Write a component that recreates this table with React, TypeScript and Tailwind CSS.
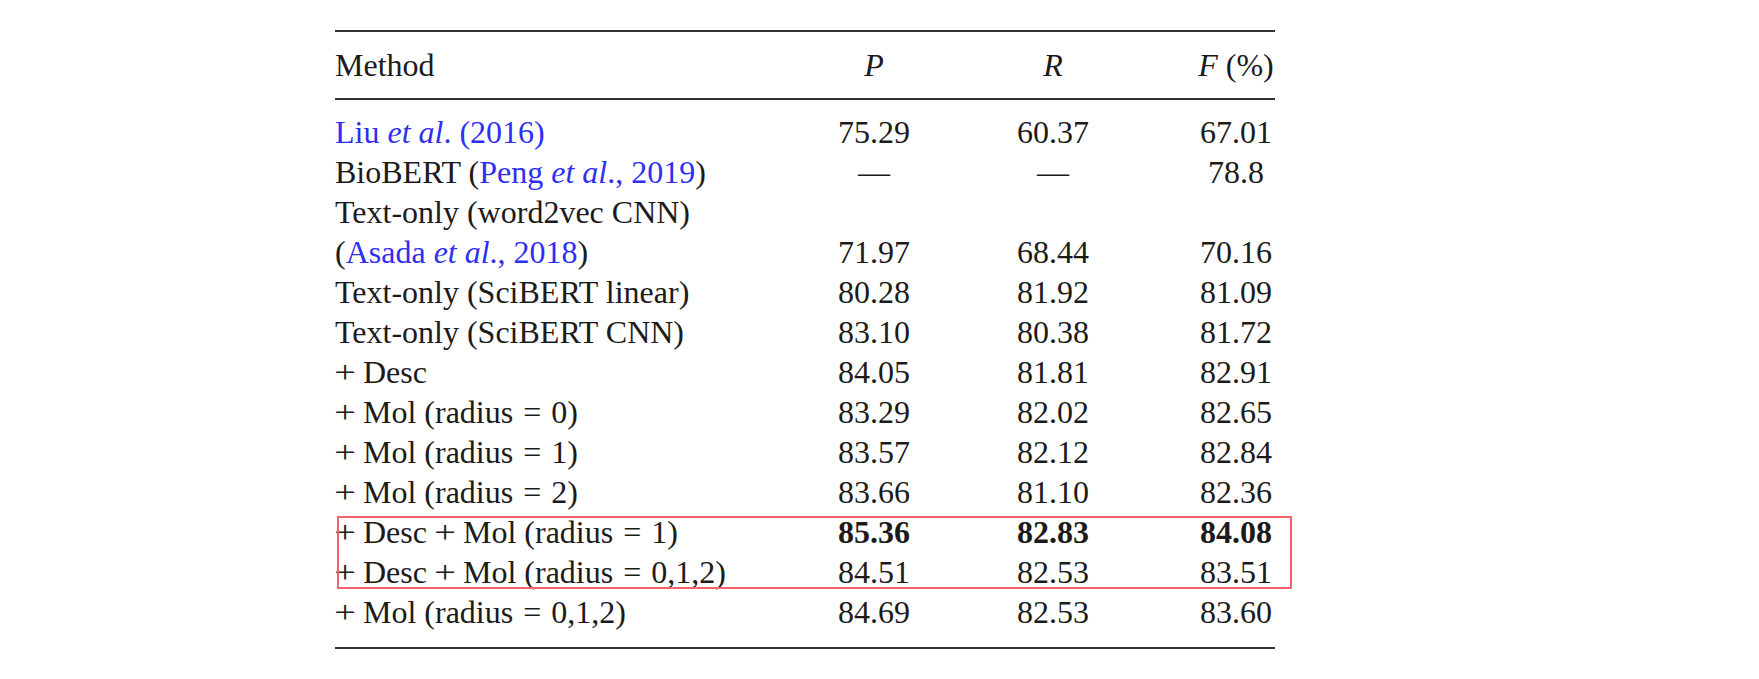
import React from "react";

const BLUE = "text-[#2f2ff2]";

type Row = {
  method: React.ReactNode;
  p?: string;
  r?: string;
  f?: string;
  bold?: boolean;
};

const Cite = ({ children }: { children: React.ReactNode }) => (
  <span className={BLUE}>{children}</span>
);

const Plus = () => (
  <span className="inline-block w-[20px] scale-x-[1.2] text-center">+</span>
);

const Radius = ({ v }: { v: string }) => (
  <>
    (radius <span className="mx-[2px]">=</span> {v})
  </>
);

const rows: Row[] = [
  {
    method: (
      <Cite>
        Liu <i>et al</i>. (2016)
      </Cite>
    ),
    p: "75.29",
    r: "60.37",
    f: "67.01",
  },
  {
    method: (
      <>
        BioBERT (
        <Cite>
          Peng <i>et al</i>., 2019
        </Cite>
        )
      </>
    ),
    p: "—",
    r: "—",
    f: "78.8",
  },
  { method: "Text-only (word2vec CNN)" },
  {
    method: (
      <>
        (
        <Cite>
          Asada <i>et al</i>., 2018
        </Cite>
        )
      </>
    ),
    p: "71.97",
    r: "68.44",
    f: "70.16",
  },
  { method: "Text-only (SciBERT linear)", p: "80.28", r: "81.92", f: "81.09" },
  { method: "Text-only (SciBERT CNN)", p: "83.10", r: "80.38", f: "81.72" },
  {
    method: (
      <>
        <Plus /> Desc
      </>
    ),
    p: "84.05",
    r: "81.81",
    f: "82.91",
  },
  {
    method: (
      <>
        <Plus /> Mol <Radius v="0" />
      </>
    ),
    p: "83.29",
    r: "82.02",
    f: "82.65",
  },
  {
    method: (
      <>
        <Plus /> Mol <Radius v="1" />
      </>
    ),
    p: "83.57",
    r: "82.12",
    f: "82.84",
  },
  {
    method: (
      <>
        <Plus /> Mol <Radius v="2" />
      </>
    ),
    p: "83.66",
    r: "81.10",
    f: "82.36",
  },
];

const boxed: Row[] = [
  {
    method: (
      <>
        <Plus /> Desc <Plus /> Mol <Radius v="1" />
      </>
    ),
    p: "85.36",
    r: "82.83",
    f: "84.08",
    bold: true,
  },
  {
    method: (
      <>
        <Plus /> Desc <Plus /> Mol <Radius v="0,1,2" />
      </>
    ),
    p: "84.51",
    r: "82.53",
    f: "83.51",
  },
];

const last: Row[] = [
  {
    method: (
      <>
        <Plus /> Mol <Radius v="0,1,2" />
      </>
    ),
    p: "84.69",
    r: "82.53",
    f: "83.60",
  },
];

const GRID = "grid grid-cols-[449px_180px_178px_133px] items-center";

function TableRow({ row }: { row: Row }) {
  const num = row.bold ? "font-bold" : "";
  return (
    <div className={`${GRID} h-[40px]`}>
      <div className="whitespace-nowrap">{row.method}</div>
      <div className={`text-center ${num}`}>{row.p}</div>
      <div className={`text-center ${num}`}>{row.r}</div>
      <div className="flex justify-end">
        <span className={`w-[78px] text-center ${num}`}>{row.f}</span>
      </div>
    </div>
  );
}

export default function App() {
  return (
    <div className="min-h-[679px] w-full bg-white">
      <div
        className="ml-[335px] w-[940px] pt-[30px] text-[32px] leading-[40px] text-[#1c1b1a]"
        style={{ fontFamily: '"Liberation Serif", "Times New Roman", serif' }}
      >
        <div className="border-t-2 border-[#333333]" />
        <div className={`${GRID} h-[68px] border-b-2 border-[#333333]`}>
          <div>Method</div>
          <div className="text-center italic">P</div>
          <div className="text-center italic">R</div>
          <div className="flex justify-end">
            <span className="w-[78px] text-center">
              <i>F</i> (%)
            </span>
          </div>
        </div>
        <div className="pt-[12px] pb-[15px] border-b-2 border-[#333333]">
          {rows.map((r, i) => (
            <TableRow key={i} row={r} />
          ))}
          <div className="relative">
            {boxed.map((r, i) => (
              <TableRow key={i} row={r} />
            ))}
            <div className="pointer-events-none absolute left-[2px] right-[-17px] top-[4px] bottom-[3px] border-2 border-[#f2636c]" />
          </div>
          {last.map((r, i) => (
            <TableRow key={i} row={r} />
          ))}
        </div>
      </div>
    </div>
  );
}
